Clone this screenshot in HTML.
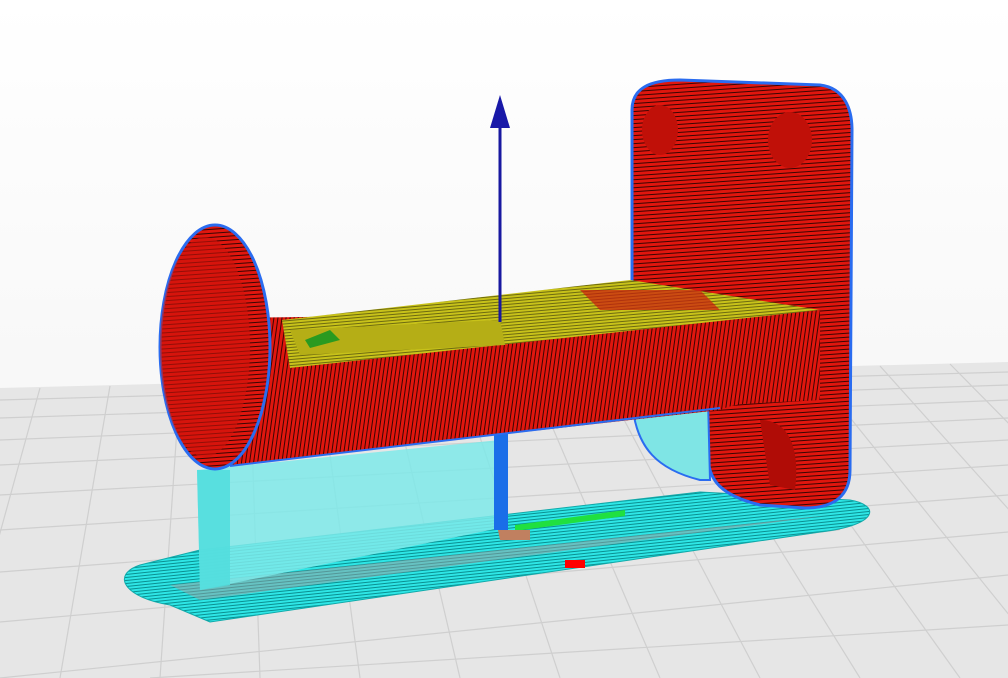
<!DOCTYPE html>
<html><head><meta charset="utf-8"><style>
html,body{margin:0;padding:0;width:1008px;height:678px;overflow:hidden;background:#fff}
</style></head><body>
<svg width="1008" height="678" viewBox="0 0 1008 678" xmlns="http://www.w3.org/2000/svg">
<defs>
<linearGradient id="bg" x1="0" y1="0" x2="0" y2="1">
<stop offset="0" stop-color="#ffffff"/><stop offset="1" stop-color="#f2f2f2"/></linearGradient>
<pattern id="red" width="6" height="4" patternUnits="userSpaceOnUse" patternTransform="rotate(-4)">
<rect width="6" height="4" fill="#e0160e"/><rect y="3" width="6" height="1" fill="#3a0502"/></pattern>
<pattern id="redv" width="4" height="6" patternUnits="userSpaceOnUse" patternTransform="rotate(8)">
<rect width="4" height="6" fill="#e0160e"/><rect x="3" width="1" height="6" fill="#3a0502"/></pattern>
<pattern id="cyan" width="6" height="3" patternUnits="userSpaceOnUse" patternTransform="rotate(-6)">
<rect width="6" height="3" fill="#2ee6e6"/><rect y="2" width="6" height="1" fill="#0a8f90"/></pattern>
<pattern id="yel" width="6" height="3" patternUnits="userSpaceOnUse" patternTransform="rotate(-5)">
<rect width="6" height="3" fill="#c8c21a"/><rect y="2" width="6" height="1" fill="#6d6a10"/></pattern>
</defs>
<rect width="1008" height="678" fill="url(#bg)"/>
<!-- floor -->
<polygon points="0,388 1008,362 1008,678 0,678" fill="#e6e6e6"/>
<g stroke="#cfcfcf" stroke-width="1.2">
<line x1="0" y1="400" x2="1008" y2="372"/><line x1="0" y1="418" x2="1008" y2="385"/>
<line x1="0" y1="440" x2="1008" y2="400"/><line x1="0" y1="465" x2="1008" y2="418"/>
<line x1="0" y1="495" x2="1008" y2="440"/><line x1="0" y1="530" x2="1008" y2="465"/>
<line x1="0" y1="572" x2="1008" y2="495"/><line x1="0" y1="622" x2="1008" y2="532"/>
<line x1="0" y1="678" x2="1008" y2="575"/><line x1="150" y1="678" x2="1008" y2="625"/>
<line x1="40" y1="388" x2="-40" y2="678"/><line x1="110" y1="386" x2="60" y2="678"/>
<line x1="180" y1="384" x2="160" y2="678"/><line x1="250" y1="382" x2="260" y2="678"/>
<line x1="320" y1="381" x2="360" y2="678"/><line x1="390" y1="379" x2="460" y2="678"/>
<line x1="460" y1="377" x2="560" y2="678"/><line x1="530" y1="375" x2="660" y2="678"/>
<line x1="600" y1="374" x2="760" y2="678"/><line x1="670" y1="372" x2="860" y2="678"/>
<line x1="740" y1="370" x2="960" y2="678"/><line x1="810" y1="368" x2="1060" y2="678"/>
<line x1="880" y1="366" x2="1160" y2="678"/><line x1="950" y1="364" x2="1260" y2="678"/>
</g>
<!-- shadow -->
<polygon points="200,590 830,520 840,530 210,615" fill="#9a9a9a" opacity="0.6"/>
<!-- brim -->
<path d="M140,565 C110,575 125,598 170,605 L210,622 L820,532 C880,525 880,505 850,500 L700,492 L200,550 Z" fill="url(#cyan)" stroke="#1aa" stroke-width="1"/>
<path d="M170,585 L830,515 L200,600 Z" fill="#9d9d9d" opacity="0.5"/>
<!-- support block -->
<polygon points="197,470 500,440 500,528 200,590" fill="#7ee9e9" opacity="0.85"/>
<polygon points="197,470 230,470 230,585 200,590" fill="#52dede" opacity="0.9"/>
<rect x="494" y="430" width="14" height="100" fill="#1a6ee8"/>
<polygon points="515,525 625,510 625,516 515,531" fill="#20e040"/>
<polygon points="498,530 530,530 530,540 500,540" fill="#c08060"/>
<rect x="565" y="560" width="20" height="8" fill="#f00"/>
<!-- right plate -->
<path d="M632,110 C632,88 650,80 680,80 L820,85 C845,88 852,110 852,130 L850,470 C850,495 835,508 805,508 L760,505 C720,495 710,480 708,460 L700,400 L640,400 C632,390 632,380 632,360 Z" fill="url(#red)" stroke="#2a6cf0" stroke-width="3"/>
<path d="M632,400 C635,450 660,470 700,480 L710,480 L708,400 Z" fill="#7fe5e5" stroke="#2a6cf0" stroke-width="2"/>
<ellipse cx="660" cy="130" rx="18" ry="25" fill="#c01008"/>
<ellipse cx="790" cy="140" rx="22" ry="28" fill="#c01008"/>
<path d="M760,420 C790,420 800,450 795,490 L770,485 Z" fill="#b00c06"/>
<!-- tube -->
<path d="M230,318 L820,310 L820,400 L720,405 L230,465 Z" fill="url(#redv)"/>
<polygon points="282,320 630,280 820,310 290,368" fill="url(#yel)"/>
<polygon points="290,330 500,320 505,345 300,355" fill="#b5ae16"/>
<polygon points="305,340 330,330 340,340 310,348" fill="#2a9a20"/>
<polygon points="580,290 700,290 720,310 600,310" fill="#cc1a0e" opacity="0.7"/>
<path d="M290,368 L820,312 L820,400 C760,398 730,405 720,410 L230,465 Z" fill="url(#redv)"/>
<!-- left disc -->
<ellipse cx="215" cy="347" rx="55" ry="122" fill="url(#red)" stroke="#2a6cf0" stroke-width="3"/>
<ellipse cx="205" cy="347" rx="45" ry="110" fill="#cf140c" opacity="0.6"/>
<line x1="230" y1="466" x2="720" y2="408" stroke="#2a6cf0" stroke-width="2"/>
<!-- axis arrow -->
<line x1="500" y1="118" x2="500" y2="322" stroke="#1818a0" stroke-width="3"/>
<polygon points="500,95 490,128 510,128" fill="#1818a8"/>
</svg>
</body></html>
